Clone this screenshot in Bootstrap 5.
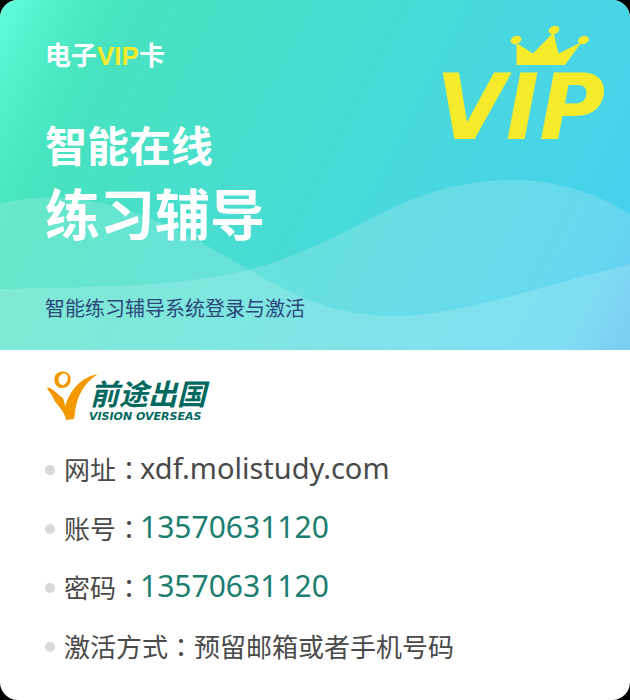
<!DOCTYPE html>
<html lang="zh-CN">
<head>
<meta charset="utf-8">
<meta name="viewport" content="width=device-width, initial-scale=1">
<title>电子VIP卡</title>
<link href="https://cdn.jsdelivr.net/npm/bootstrap@5.3.0/dist/css/bootstrap.min.css" rel="stylesheet">
<style>
body{background:#000;color:#4a4a4a;font-family:"Noto Sans","Noto Sans CJK SC",sans-serif}
.vip-card{border-radius:18px}
.hero{height:350px;padding:35px 24px 0 45px;background:linear-gradient(117deg,#60ffdc 0%,#54f1cd 6%,#48e3bf 15%,#48dfca 32%,#48dbd5 50%,#49d6e3 70%,#47d3ea 84%,#46ceef 92%,#42b5ec 100%)}
.brand-line{font-size:26px;line-height:40px}
.gold{color:#f6eb2b;font-family:"Liberation Sans",sans-serif}
.headline-a{font-size:42px;line-height:60px;margin-top:40px}
.headline-b{font-size:55px;line-height:76px}
.sub{font-size:20px;line-height:30px;color:#2b4878;margin-top:42px}
.vip-mark{width:172px;height:126px;margin-top:-11px}
.details{padding:20px 45px 24px}
.agency{width:166px;height:56px}
.facts{margin-top:14px;font-size:26px;line-height:40px}
.facts dt,.facts dd{font-weight:400;margin:0}
.fact-row{height:59px}
.dot{width:10px;height:10px;background:#d8d8d8;margin-right:9px}
.facts .value{font-size:30px;margin:-4px 0 0 -2px}
.facts .site{font-size:29px;margin:-4px 0 0 -2px}
.teal{color:#1b7d70}
</style>
<script src="https://cdn.jsdelivr.net/npm/bootstrap@5.3.0/dist/js/bootstrap.bundle.min.js" defer></script>
</head>
<body>
<main class="vip-card bg-white min-vh-100 overflow-hidden">
  <header class="hero position-relative d-flex justify-content-between align-items-start text-white">
    <svg class="position-absolute top-0 start-0 w-100 h-100" viewBox="0 0 630 350" preserveAspectRatio="none" aria-hidden="true">
      <g fill="#fff" fill-opacity=".17">
        <path d="M0 204C60 188 125 201 200 242C265 276 310 316 395 316C455 316 540 287 630 264V350H0Z"/>
        <path d="M0 289C90 287 165 287 230 274C285 263 330 240 376 216C420 194 460 180 512 180C557 180 596 193 630 214V350H0Z"/>
      </g>
    </svg>
    <div class="position-relative">
      <div class="brand-line fw-bold">电子<span class="gold">VIP</span>卡</div>
      <h1 class="fw-bold mb-0"><span class="headline-a d-block">智能在线</span><span class="headline-b d-block">练习辅导</span></h1>
      <p class="sub mb-0">智能练习辅导系统登录与激活</p>
    </div>
    <svg class="vip-mark position-relative flex-shrink-0 overflow-visible" viewBox="434 24 172 126" fill="#f6eb2b" role="img" aria-label="VIP">
      <path d="M516.500 65V43L533 53.500L552 34L554 34L558.500 53.500L580 43L581 43L565 65Z"/>
      <ellipse cx="516" cy="40" rx="5.500" ry="4" transform="rotate(-20 516 40)"/>
      <ellipse cx="554" cy="30" rx="5.500" ry="4" transform="rotate(-20 554 30)"/>
      <ellipse cx="583.500" cy="40" rx="5.500" ry="4" transform="rotate(-20 583.500 40)"/>
      <text x="436" y="139" font-family="DejaVu Sans" font-weight="700" font-style="oblique" font-size="90">VIP</text>
    </svg>
  </header>
  <section class="details">
    <svg class="agency d-block" viewBox="45 370 166 56" role="img" aria-label="前途出国 VISION OVERSEAS">
      <g fill="#f39800">
        <path fill-rule="evenodd" d="M55 376C57 371 67 369 70 376C72 382 69 388 62 388C56 388 53 382 55 376M61 375C57 377 58 384 62 385C67 385 69 378 67 375C65 373 62 373 61 375Z"/>
        <path d="M47 388C51 386 58 395 63 398C64 401 65 404 65 407C70 389 82 377 98 374C87 381 80 391 77 402C75 409 75 414 74 419L66 420C65 412 58 406 54 400C52 394 49 392 47 388Z"/>
      </g>
      <g fill="#00695f">
        <text x="90" y="405" font-family="Noto Sans CJK SC" font-weight="700" font-style="italic" font-size="29">前途出国</text>
        <text x="89" y="420" font-family="DejaVu Sans" font-weight="700" font-style="italic" font-size="11">VISION OVERSEAS</text>
      </g>
    </svg>
    <dl class="facts mb-0">
      <div class="fact-row d-flex align-items-center"><span class="dot rounded-circle"></span><dt>网址<span lang="zh-TW">：</span></dt><dd class="site">xdf.molistudy.com</dd></div>
      <div class="fact-row d-flex align-items-center"><span class="dot rounded-circle"></span><dt>账号<span lang="zh-TW">：</span></dt><dd class="value teal">13570631120</dd></div>
      <div class="fact-row d-flex align-items-center"><span class="dot rounded-circle"></span><dt>密码<span lang="zh-TW">：</span></dt><dd class="value teal">13570631120</dd></div>
      <div class="fact-row d-flex align-items-center"><span class="dot rounded-circle"></span><dt>激活方式<span lang="zh-TW">：</span></dt><dd>预留邮箱或者手机号码</dd></div>
    </dl>
  </section>
</main>
</body>
</html>
